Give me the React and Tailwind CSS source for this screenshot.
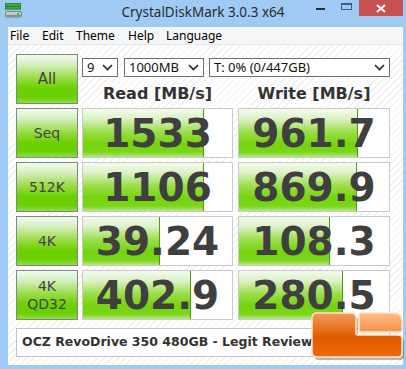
const rows = [
  { label: ["Seq"], read: "1533", write: "961.7", rw: 121, ww: 119 },
  { label: ["512K"], read: "1106", write: "869.9", rw: 121, ww: 118 },
  { label: ["4K"], read: "39.24", write: "108.3", rw: 77, ww: 91 },
  { label: ["4K", "QD32"], read: "402.9", write: "280.5", rw: 108, ww: 104 },
];

const Chevron = () => (
  <svg width="11" height="7" viewBox="0 0 11 7" className="shrink-0">
    <path d="M1 1 L5.5 5.5 L10 1" fill="none" stroke="#222" strokeWidth="1.6" />
  </svg>
);

const Select = ({ w, text }) => (
  <div
    className={`${w} h-[19px] bg-white border border-[#6f6f6f] flex items-center justify-between pl-[4px] pr-[4px] text-[13px] leading-none text-[#111]`}
    style={{ fontFamily: '"Noto Sans", sans-serif' }}
  >
    <span>{text}</span>
    <Chevron />
  </div>
);

const GreenButton = ({ children, className = "" }) => (
  <div
    className={`w-[62px] h-[50px] shrink-0 border border-[#7d8b7d] flex flex-col items-center justify-center text-[#444] bg-[linear-gradient(to_bottom,#f4faef_0%,#d6efc0_20%,#98dc44_48%,#6cd000_70%,#6ad004_88%,#8ede42_100%)] ${className}`}
    style={{ fontFamily: '"DejaVu Sans", sans-serif' }}
  >
    {children}
  </div>
);

const ValueBox = ({ w, value, bar }) => (
  <div
    className={`${w} h-[50px] shrink-0 relative bg-white border border-[#cacaca] flex items-center justify-center`}
  >
    <div
      className="absolute left-0 top-0 bottom-0 border-r border-[#4c9a14] bg-[linear-gradient(to_bottom,#f4fbee_0%,#dcf2c8_20%,#9ade48_48%,#76d40e_72%,#7ad618_90%,#b6e886_100%)]"
      style={{ width: bar }}
    />
    <span
      className="relative text-[39px] font-bold leading-none text-[#3f3f3f]"
      style={{ fontFamily: '"DejaVu Sans", sans-serif' }}
    >
      {value}
    </span>
  </div>
);

const Logo = () => (
  <svg
    width="96"
    height="52"
    viewBox="0 0 96 52"
    className="absolute left-[310px] top-[311px]"
  >
    <defs>
      <linearGradient id="lgMain" x1="0" y1="0" x2="0" y2="1">
        <stop offset="0" stopColor="#f29a62" />
        <stop offset="0.35" stopColor="#e97420" />
        <stop offset="0.55" stopColor="#e05a00" />
        <stop offset="1" stopColor="#f06c08" />
      </linearGradient>
      <linearGradient id="lgTop" x1="0" y1="0" x2="0" y2="1">
        <stop offset="0" stopColor="#fcbc86" />
        <stop offset="1" stopColor="#f4924a" />
      </linearGradient>
    </defs>
    <path
      d="M9,5 H43 Q48,5 48,10 V25 Q48,27 50,27 H90 Q94,27 94,31 V45 Q94,49 90,49 H9 Q4,49 4,44 V10 Q4,5 9,5 Z"
      fill="rgba(0,0,0,0.28)"
    />
    <path
      d="M7,2 H41 Q46,2 46,7 V22 Q46,24 48,24 H88 Q92,24 92,28 V42 Q92,46 88,46 H7 Q2,46 2,41 V7 Q2,2 7,2 Z"
      fill="url(#lgMain)"
      stroke="#ffe4c8"
      strokeWidth="1.5"
    />
    <path
      d="M51,2 H84 Q92,2 92,10 V19 Q92,21 90,21 H51 Q49,21 49,19 V4 Q49,2 51,2 Z"
      fill="url(#lgTop)"
      stroke="#ffe4c8"
      strokeWidth="1.5"
    />
  </svg>
);

export default function App() {
  return (
    <div className="w-[406px] h-[369px] bg-[#9fcaf3] flex flex-col relative overflow-hidden">
      {/* Title bar */}
      <div className="h-[27px] shrink-0 grid grid-cols-[1fr_auto_1fr] items-start">
        <div className="pl-[4px] pt-[2px]">
          <svg width="18" height="17" viewBox="0 0 18 17">
            <rect x="1.5" y="1.5" width="15" height="2.6" fill="#3fb24a" stroke="#1f7a2a" strokeWidth="0.8" />
            <rect x="1.5" y="4.6" width="15" height="2.6" fill="#36a840" stroke="#1f7a2a" strokeWidth="0.8" />
            <rect x="1.5" y="9.5" width="16" height="5.5" rx="1.5" fill="#c9ccd0" stroke="#6a6f74" strokeWidth="0.8" />
            <rect x="2" y="12.8" width="15" height="2" fill="#8a8f94" />
            <rect x="13" y="11" width="2.2" height="2" fill="#2fbf3a" />
          </svg>
        </div>
        <div
          className="pt-[2px] text-[13.5px] leading-[20px] text-[#2b2b2b]"
          style={{ fontFamily: '"Noto Sans", sans-serif' }}
        >
          CrystalDiskMark 3.0.3 x64
        </div>
        <div className="flex items-start justify-end pr-[3px]">
          <div className="w-[9px] h-[2px] mt-[8px] bg-[#2e2e2e]" />
          <div className="w-[11px] h-[7px] mt-[3px] ml-[16px] border border-t-2 border-[#405d7c]" />
          <div className="w-[44px] h-[16px] ml-[7px] bg-[#c75050] flex items-center justify-center">
            <svg width="10" height="9" viewBox="0 0 10 9">
              <path d="M1 1 L9 8 M9 1 L1 8" stroke="#fff" strokeWidth="2" />
            </svg>
          </div>
        </div>
      </div>

      {/* Menu bar */}
      <div
        className="ml-[8px] mr-[3px] h-[18px] shrink-0 bg-[#f5f6f7] border-b border-[#e4e4e4] flex items-center pl-[2px] text-[12px] text-black"
        style={{ fontFamily: '"Noto Sans", sans-serif' }}
      >
        <span className="w-[32px]">File</span>
        <span className="w-[34px]">Edit</span>
        <span className="w-[52px]">Theme</span>
        <span className="w-[38px]">Help</span>
        <span>Language</span>
      </div>

      {/* Client */}
      <div className="ml-[8px] mr-[3px] h-[320px] shrink-0 bg-[repeating-linear-gradient(135deg,#ffffff_0px,#ffffff_4px,#f0f0f0_4px,#f0f0f0_5px)] pl-[8px] pt-[9px] flex flex-col">
        <div className="flex">
          <GreenButton className="text-[15px]">All</GreenButton>
          <div className="ml-[4px] w-[308px] flex flex-col">
            <div className="flex mt-[4px]">
              <Select w="w-[36px]" text="9" />
              <div className="ml-[6px]">
                <Select w="w-[80px]" text="1000MB" />
              </div>
              <div className="ml-[5px]">
                <Select w="w-[181px]" text="T: 0% (0/447GB)" />
              </div>
            </div>
            <div
              className="flex mt-[7px] text-[16px] font-bold leading-[20px] text-[#333]"
              style={{ fontFamily: '"DejaVu Sans", sans-serif' }}
            >
              <div className="w-[151px] text-center">Read [MB/s]</div>
              <div className="w-[152px] ml-[5px] text-center">Write [MB/s]</div>
            </div>
          </div>
        </div>

        {rows.map((r) => (
          <div key={r.read} className="flex mt-[4px]">
            <GreenButton className="text-[14px] leading-[18px]">
              {r.label.map((l) => (
                <span key={l}>{l}</span>
              ))}
            </GreenButton>
            <div className="ml-[4px]">
              <ValueBox w="w-[151px]" value={r.read} bar={r.rw} />
            </div>
            <div className="ml-[5px]">
              <ValueBox w="w-[152px]" value={r.write} bar={r.ww} />
            </div>
          </div>
        ))}

        <div
          className="mt-[8px] w-[374px] h-[29px] bg-white border border-[#c4c4c4] flex items-center pl-[5px] text-[12.5px] font-bold text-[#333]"
          style={{ fontFamily: '"DejaVu Sans", sans-serif' }}
        >
          OCZ RevoDrive 350 480GB - Legit Review
        </div>
      </div>

      <Logo />
    </div>
  );
}
